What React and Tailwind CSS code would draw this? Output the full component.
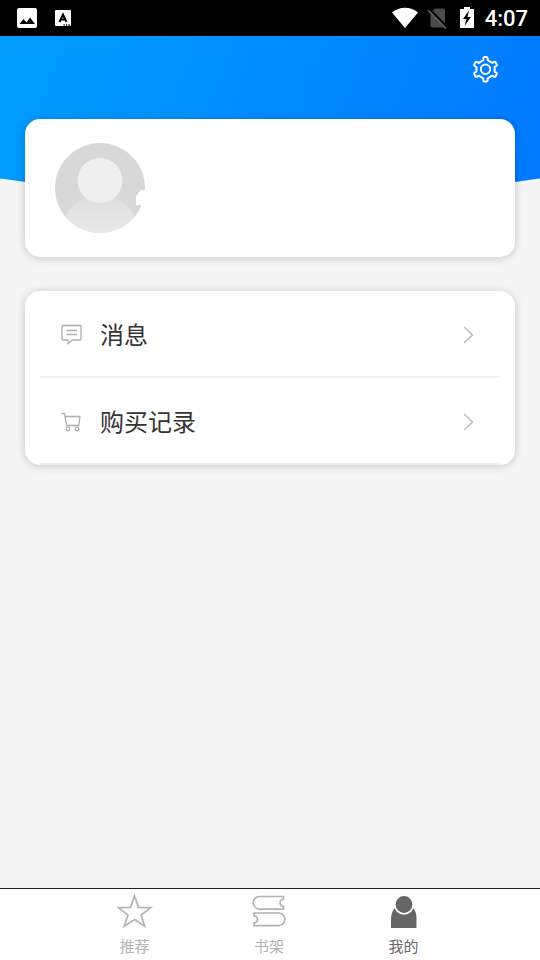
import React from 'react';

function StatusBar() {
  return (
    <div className="flex h-9 shrink-0 items-center bg-black pl-4 pr-3 text-white">
      <svg className="h-[22px] w-[22px]" viewBox="0 0 22 22" aria-hidden="true">
        <rect x="1" y="1" width="20" height="20" rx="2" fill="#fff" />
        <path d="M3.500 17l4-5 3 3.500 3.500-5 5 6.500z" fill="#000" />
      </svg>
      <svg className="ml-[17px] h-4 w-4" viewBox="0 0 16 16" aria-hidden="true">
        <rect width="16" height="16" rx="1" fill="#fff" />
        <path d="M4.500 12L8 4.500 11.500 12M5.700 9.500h4.600" fill="none" stroke="#000" strokeWidth="2" />
        <path d="M8.500 15h1.300M11 15h1.300M13.500 15h1.300" stroke="#000" strokeWidth="1.300" />
      </svg>
      <svg className="ml-auto h-[22px] w-[26px]" viewBox="0 0 26 22" aria-hidden="true">
        <path d="M0 5.500C7-.8 19-.8 26 5.500L13 21z" fill="#fff" />
      </svg>
      <svg className="ml-2 h-[22px] w-[22px]" viewBox="0 0 22 22" aria-hidden="true">
        <path d="M9 1.500h8a2 2 0 0 1 2 2v15a2 2 0 0 1-2 2H6.500a2 2 0 0 1-2-2V6z" fill="#4a4a4a" />
        <path d="M3.500 2L21.500 20.500" stroke="#000" strokeWidth="2" />
        <path d="M2 3L20 21.500" stroke="#606060" strokeWidth="1.700" />
      </svg>
      <svg className="ml-3 h-[22px] w-[14px]" viewBox="0 0 14 22" aria-hidden="true">
        <path d="M4 0h6v2h4v19H0V2h4z" fill="#fff" />
        <path d="M9 3.500L3 12h3.500L4.500 19l6.500-9H7.500z" fill="#000" />
      </svg>
      <span className="ml-[11px] pt-[2px] font-[Roboto,sans-serif] text-[22px] font-medium leading-[34px]">4:07</span>
    </div>
  );
}

function MessageIcon() {
  return (
    <svg className="h-[22px] w-[22px]" viewBox="0 -1 22 22" fill="none" stroke="#adadad" strokeWidth="1.300" strokeLinejoin="round" aria-hidden="true">
      <path d="M2.500 1.500h17.500q1 0 1 1v12.500q0 1-1 1h-8l-4 4v-4h-5q-1 0-1-1v-12.500q0-1 1-1z" />
      <path d="M6.500 6.500h10.500M6.500 10.500h10.500" />
    </svg>
  );
}

function CartIcon() {
  return (
    <svg className="h-[22px] w-[22px]" viewBox="0 -1 22 22" fill="none" stroke="#adadad" strokeWidth="1.300" strokeLinejoin="round" aria-hidden="true">
      <path d="M1.300 2.500h3.200L6.500 14.500h12.300l1.200-9H5" />
      <circle cx="8" cy="18" r="1.800" />
      <circle cx="17" cy="18" r="1.800" />
    </svg>
  );
}

function MenuRow({ icon, label }) {
  return (
    <button type="button" className="flex h-[87px] w-full items-center border-b-2 border-[#f0f0f0] pl-5 pr-6 pt-px text-left">
      {icon}
      <span className="ml-[18px] text-2xl text-[#333]">{label}</span>
      <svg className="ml-auto h-5 w-4" viewBox="0 0 16 20" fill="none" stroke="#bcbcbc" strokeWidth="1.500" aria-hidden="true">
        <path d="M4 3l8.500 8L4 19" />
      </svg>
    </button>
  );
}

function StarIcon() {
  return (
    <svg className="h-9 w-9" viewBox="0 0 36 36" fill="none" stroke="#b3b3b3" strokeWidth="1.700" aria-hidden="true">
      <path d="M17.500 3l4 11.300 12.300.3-9.800 7.400 3.800 11.300-10.300-6.800-10.300 6.800L11 22 1.200 14.600l12.300-.3z" />
    </svg>
  );
}

function BooksIcon() {
  return (
    <svg className="h-9 w-9" viewBox="0 0 36 36" fill="none" stroke="#b3b3b3" strokeWidth="1.700" aria-hidden="true">
      <path d="M32.500 3.500H8.500a6.300 6.300 0 0 0 0 12.600h24v-2.800a3.500 3.500 0 0 1 0-7z" />
      <path d="M3 20h24.500a6.300 6.300 0 0 1 0 12.600H3v-2.800a3.500 3.500 0 0 0 0-7z" />
    </svg>
  );
}

function PersonIcon() {
  return (
    <svg className="h-9 w-9" viewBox="0 0 36 36" fill="#666" aria-hidden="true">
      <path d="M5 35V26C5 21 6.500 17 10 13.500h16c3.500 3.500 4.500 7.500 4.500 12.500V35z" />
      <circle cx="18" cy="11.500" r="9.300" stroke="#fff" strokeWidth="1.800" />
    </svg>
  );
}

function Tab({ icon, label, active }) {
  return (
    <a
      href="#"
      aria-current={active ? 'page' : undefined}
      className={`flex w-1/4 flex-col items-center pt-1 text-[15px] leading-[22px] ${active ? 'text-[#666]' : 'text-[#b3b3b3]'}`}
    >
      {icon}
      <span className="mt-[6px]">{label}</span>
    </a>
  );
}

export default function App() {
  return (
    <div className="flex min-h-screen flex-col bg-[#f5f5f5] font-['Noto_Sans_CJK_SC',sans-serif]">
      <StatusBar />
      <header className="h-[162px] bg-linear-110 from-[#009eff] to-[#0078ff] pr-10 pt-[19px] [clip-path:ellipse(105%_100%_at_50%_0)]">
        <button type="button" aria-label="设置" className="ml-auto block">
          <svg className="h-7 w-7" viewBox="0 0 28 28" fill="none" stroke="#fff" strokeWidth="2" strokeLinejoin="round" aria-hidden="true">
            <path d="M11.300 3.500Q11.300 2 12.500 2h2q1.200 0 1.200 1.500v1.700l4.500 2.700 1.500-.8q1.300-.7 2 .4l1 1.800q.6 1.100-.7 1.900l-1.400.8v4.600l1.400.8q1.300.8.7 1.900l-1 1.800q-.7 1.100-2 .4l-1.500-.8-4.500 2.700v1.700q0 1.500-1.200 1.500h-2q-1.200 0-1.200-1.500v-1.700l-4.500-2.700-1.500.8q-1.300.7-2-.4l-1-1.800q-.6-1.100.7-1.900l1.400-.8v-4.600l-1.400-.8q-1.300-.8-.7-1.900l1-1.800q.7-1.100 2-.4l1.500.8 4.500-2.700z" />
            <circle cx="13.500" cy="14.300" r="4.700" />
          </svg>
        </button>
      </header>
      <main className="relative -mt-[79px] flex-1 px-[25px]">
        <section className="rounded-[15px] bg-white px-[30px] py-6 shadow-[0_1px_10px_rgba(0,0,0,0.2)]">
          <svg className="h-[90px] w-[90px]" viewBox="0 0 90 90" role="img" aria-label="头像">
            <defs>
              <clipPath id="avatar"><circle cx="45" cy="45" r="45" /></clipPath>
              <linearGradient id="body" x1="0" y1="0" x2="0" y2="1">
                <stop offset="0" stopColor="#dedede" />
                <stop offset="0.5" stopColor="#e9e9e9" />
              </linearGradient>
            </defs>
            <g clipPath="url(#avatar)">
              <rect width="90" height="90" fill="#d8d8d8" />
              <circle cx="45" cy="91" r="39" fill="url(#body)" />
              <circle cx="45" cy="37.500" r="22.500" fill="#efefef" />
            </g>
            <path d="M90 47h-4l-5 6v9h9z" fill="#fff" />
          </svg>
        </section>
        <nav className="mt-[34px] overflow-hidden rounded-[15px] bg-white px-[15px] shadow-[0_1px_10px_rgba(0,0,0,0.2)]">
          <MenuRow icon={<MessageIcon />} label="消息" />
          <MenuRow icon={<CartIcon />} label="购买记录" />
        </nav>
      </main>
      <nav className="flex h-[72px] shrink-0 justify-center border-t border-[#222] bg-white pr-[2px]">
        <Tab icon={<StarIcon />} label="推荐" />
        <Tab icon={<BooksIcon />} label="书架" />
        <Tab icon={<PersonIcon />} label="我的" active />
      </nav>
    </div>
  );
}
